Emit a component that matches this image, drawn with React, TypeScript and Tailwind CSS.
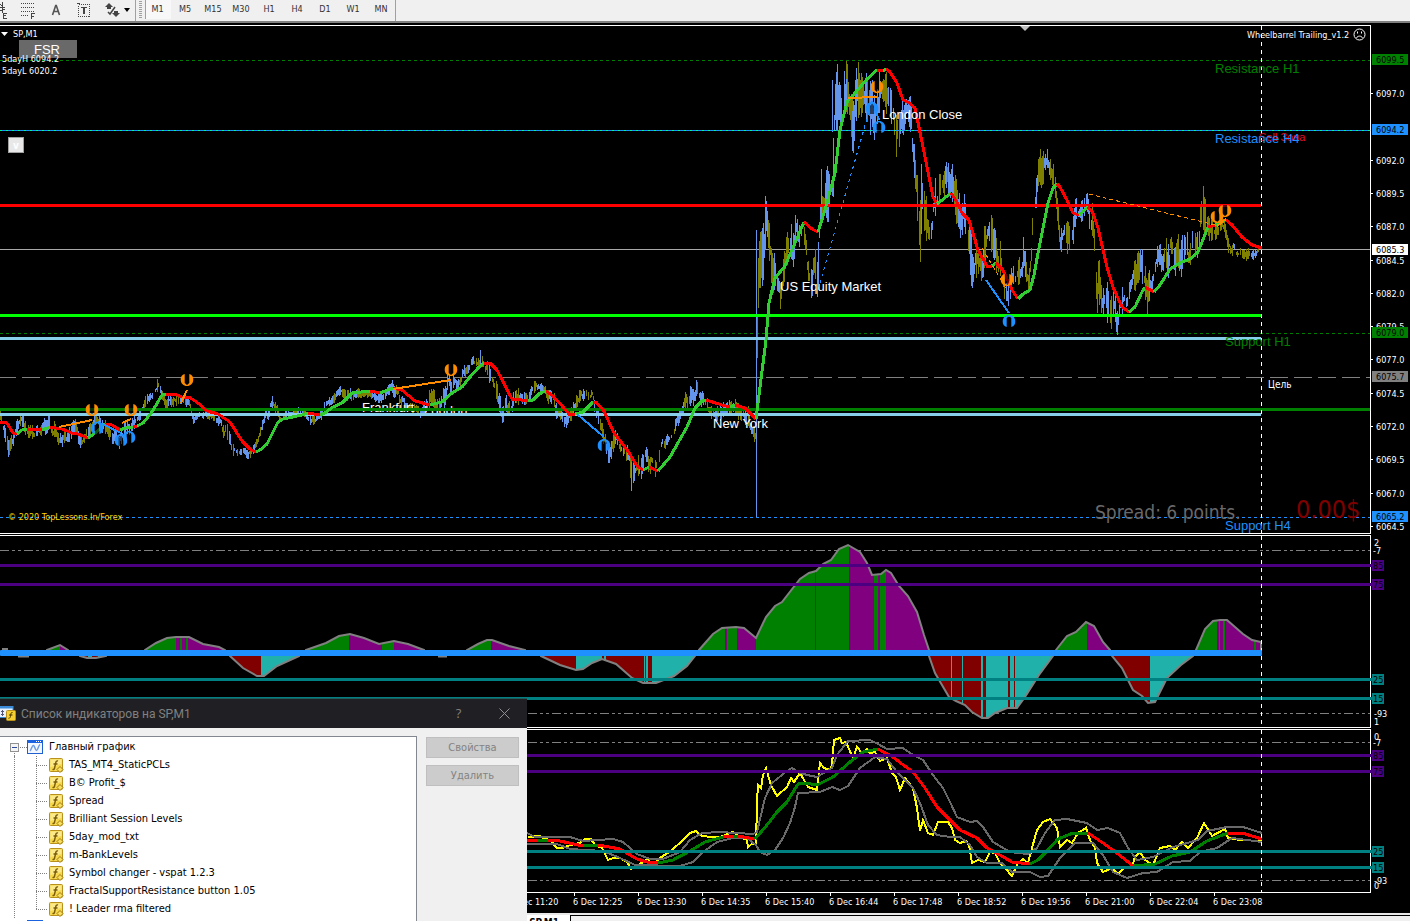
import React from "react";

type Point = [number, number];
type Segment = { color: string; points: string };

const GREEN = "#32cd32";
const RED = "#ff0000";
const UI_FONT = "font-['DejaVu_Sans_Condensed','DejaVu_Sans',sans-serif]";

/* ---------- price bars ---------- */

// x, middle, half of the bar range
const PRICE_KEYS: [number, number, number][] = [
  [0, 416, 6], [9, 450, 9], [20, 421, 8], [35, 432, 9], [50, 424, 8], [62, 442, 9], [75, 428, 8], [82, 445, 7],
  [95, 418, 8], [110, 433, 8], [118, 440, 9], [130, 425, 8], [140, 414, 6], [146, 397, 6], [152, 395, 4],
  [158, 383, 5], [165, 400, 7], [178, 402, 6], [189, 400, 6], [193, 418, 4], [205, 414, 4], [218, 418, 5],
  [228, 438, 10], [235, 450, 5], [243, 451, 4], [250, 455, 5], [258, 440, 5], [265, 415, 6], [273, 403, 7],
  [280, 417, 5], [300, 412, 4], [315, 422, 6], [325, 405, 5], [340, 391, 5], [350, 395, 6], [365, 393, 5],
  [378, 397, 5], [393, 388, 7], [405, 405, 6], [420, 410, 5], [432, 398, 13], [440, 407, 8], [447, 385, 12],
  [455, 383, 8], [465, 372, 6], [472, 362, 5], [482, 359, 6], [490, 377, 12], [502, 411, 10], [515, 398, 10],
  [528, 396, 6], [538, 384, 6], [545, 390, 6], [555, 405, 9], [563, 422, 11], [570, 411, 9], [583, 393, 7],
  [592, 394, 5], [600, 428, 9], [608, 452, 11], [615, 441, 9], [625, 450, 8], [632, 474, 14], [645, 457, 11],
  [655, 468, 10], [662, 444, 6], [672, 436, 7], [680, 413, 7], [690, 396, 12], [697, 390, 8], [705, 406, 8],
  [715, 412, 8], [730, 408, 9], [745, 414, 10], [755, 436, 14], [758, 265, 40], [766, 225, 30], [772, 272, 24],
  [780, 290, 16], [785, 262, 20], [795, 238, 20], [802, 226, 12], [806, 250, 22], [810, 275, 16], [817, 270, 26],
  [821, 200, 34], [827, 200, 32], [832, 170, 40], [835, 105, 34], [842, 98, 34], [847, 92, 28], [852, 120, 28],
  [858, 95, 32], [866, 95, 28], [873, 108, 26], [880, 95, 26], [884, 95, 26], [892, 115, 20], [898, 142, 28],
  [905, 110, 16], [911, 128, 26], [916, 165, 40], [920, 222, 42], [923, 210, 36], [930, 235, 32], [935, 205, 24],
  [940, 180, 18], [947, 178, 18], [955, 202, 28], [958, 220, 20], [964, 205, 18], [971, 258, 34], [976, 255, 26],
  [982, 256, 26], [988, 238, 22], [995, 240, 22], [1000, 262, 20], [1008, 295, 28], [1015, 275, 16],
  [1023, 260, 18], [1028, 285, 10], [1033, 220, 24], [1037, 182, 20], [1043, 165, 18], [1048, 160, 9],
  [1054, 180, 16], [1060, 235, 20], [1065, 220, 18], [1070, 243, 20], [1077, 210, 14], [1086, 202, 10],
  [1092, 228, 20], [1097, 285, 34], [1102, 305, 20], [1107, 302, 22], [1112, 308, 20], [1117, 315, 15],
  [1122, 300, 16], [1129, 292, 20], [1134, 268, 18], [1140, 264, 18], [1146, 285, 26], [1152, 286, 10],
  [1158, 258, 16], [1163, 255, 18], [1169, 250, 20], [1175, 262, 18], [1182, 256, 20], [1190, 245, 20],
  [1198, 232, 24], [1203, 212, 22], [1208, 228, 20], [1215, 232, 10], [1222, 222, 8], [1228, 246, 8],
  [1238, 251, 6], [1250, 254, 6], [1260, 250, 4],
];

const SPIKES: { x: number; from: number; to: number; up: boolean }[] = [
  { x: 757, from: 230, to: 517, up: true },
  { x: 766, from: 196, to: 250, up: true },
  { x: 833, from: 80, to: 132, up: true },
  { x: 838, from: 64, to: 110, up: true },
  { x: 847, from: 61, to: 112, up: false },
  { x: 853, from: 97, to: 147, up: false },
  { x: 859, from: 62, to: 118, up: false },
  { x: 871, from: 105, to: 135, up: true },
  { x: 1048, from: 149, to: 165, up: true },
  { x: 1148, from: 280, to: 314, up: false },
  { x: 1204, from: 186, to: 215, up: false },
  { x: 921, from: 200, to: 262, up: false },
  { x: 9, from: 440, to: 457, up: true },
  { x: 632, from: 462, to: 491, up: true },
  { x: 158, from: 379, to: 392, up: false },
  { x: 481, from: 350, to: 366, up: true },
];

function noise(n: number): number {
  const v = Math.sin(n * 127.1 + 11.7) * 43758.5453;
  return v - Math.floor(v);
}

function buildBars(): { up: string; down: string } {
  let up = "";
  let down = "";
  for (let i = 0; i < PRICE_KEYS.length - 1; i++) {
    const [x0, y0, a0] = PRICE_KEYS[i];
    const [x1, y1, a1] = PRICE_KEYS[i + 1];
    for (let x = x0; x < x1; x++) {
      if (noise(x + 2000) < 0.14) continue;
      const group = Math.floor(x / 3);
      const t = (x - x0) / (x1 - x0);
      const mid = y0 + (y1 - y0) * t;
      const amp = a0 + (a1 - a0) * t;
      const center = mid + (noise(group + 40) - 0.5) * amp;
      const half = amp * (0.12 + 0.78 * noise(x + 500));
      const bar = `M${x + 0.5} ${Math.round(center - half)}V${Math.round(center + half) + 1}`;
      const rising = noise(group + 900) * 0.8 + (y1 < y0 ? 0.18 : -0.1) > 0.45;
      if (rising) up += bar;
      else down += bar;
    }
  }
  for (const s of SPIKES) {
    const bar = `M${s.x - 0.5} ${s.from}V${s.to}`;
    if (s.up) up += bar;
    else down += bar;
  }
  return { up, down };
}

const BARS = buildBars();

const AVERAGE: Segment[] = [
  { color: RED, points: "0,422 7,423 13,433 17,434" },
  { color: GREEN, points: "17,434 22,430 27,429" },
  { color: RED, points: "27,429 42,430" },
  { color: GREEN, points: "42,430 50,427" },
  { color: RED, points: "50,427 62,429 72,433 78,434 88,438" },
  { color: GREEN, points: "88,438 95,433 105,424" },
  { color: RED, points: "105,424 112,425 120,430" },
  { color: GREEN, points: "120,430 125,428 133,427" },
  { color: RED, points: "133,427 137,426" },
  { color: GREEN, points: "137,426 143,423 152,412 162,395 166,394" },
  { color: RED, points: "166,394 177,395 182,397 189,397 198,403 207,411 218,414 230,422 242,441 250,449 256,452" },
  { color: GREEN, points: "256,452 260,450 267,444 278,422 283,419 302,415 308,413" },
  { color: RED, points: "308,413 320,415" },
  { color: GREEN, points: "320,415 325,413 333,407 342,403 352,393 370,391" },
  { color: RED, points: "370,391 380,393" },
  { color: GREEN, points: "380,393 393,388" },
  { color: RED, points: "393,388 402,390 415,401 430,405" },
  { color: GREEN, points: "430,405 442,402 452,393 462,387 470,377 478,368 484,363" },
  { color: RED, points: "484,363 490,363 497,370 512,399 515,399 528,401" },
  { color: GREEN, points: "528,401 533,400 540,393 546,391" },
  { color: RED, points: "546,391 553,396 563,407 569,414 575,414" },
  { color: GREEN, points: "575,414 583,412 593,402" },
  { color: RED, points: "593,402 596,402 604,411 614,433 628,451 637,466 643,470" },
  { color: GREEN, points: "643,470 649,467" },
  { color: RED, points: "649,467 658,471" },
  { color: GREEN, points: "658,471 670,457 687,427 695,408 702,401 706,400" },
  { color: RED, points: "706,400 722,405 730,407" },
  { color: GREEN, points: "730,407 735,405" },
  { color: RED, points: "735,405 745,408 756,419" },
  { color: GREEN, points: "756,419 760,387 766,340 769,303 775,278 785,266 795,243 804,222" },
  { color: RED, points: "804,222 812,229 818,232" },
  { color: GREEN, points: "818,232 825,210 835,173 840,130 847,102 855,93 867,79 877,70" },
  { color: RED, points: "877,70 883,71" },
  { color: GREEN, points: "883,71 886,69" },
  { color: RED, points: "886,69 890,72 897,83 903,100 908,102 915,108 923,147 933,197 937,204" },
  { color: GREEN, points: "937,204 951,193" },
  { color: RED, points: "951,193 957,202 962,213 969,220 978,250 987,266 992,266" },
  { color: GREEN, points: "992,266 996,263" },
  { color: RED, points: "996,263 1003,270 1012,290 1018,299" },
  { color: GREEN, points: "1018,299 1023,294 1030,290 1034,275 1038,253 1048,203 1053,188 1057,184" },
  { color: RED, points: "1057,184 1060,187 1067,200 1073,213 1079,215" },
  { color: GREEN, points: "1079,215 1088,207" },
  { color: RED, points: "1088,207 1093,213 1098,228 1107,267 1113,287 1122,307 1129,312" },
  { color: GREEN, points: "1129,312 1135,307 1142,292 1145,287" },
  { color: RED, points: "1145,287 1154,292" },
  { color: GREEN, points: "1154,292 1160,285 1170,269 1182,262 1190,259 1198,252 1208,227" },
  { color: RED, points: "1208,227 1215,225" },
  { color: GREEN, points: "1215,225 1226,220" },
  { color: RED, points: "1226,220 1232,225 1242,237 1252,245 1262,248" },
];

const PRICE_TICKS: [number, string][] = [
  [94, "6097.0"], [161, "6092.0"], [194, "6089.5"], [227, "6087.0"], [261, "6084.5"], [294, "6082.0"],
  [327, "6079.5"], [360, "6077.0"], [394, "6074.5"], [427, "6072.0"], [460, "6069.5"], [494, "6067.0"],
  [527, "6064.5"],
];

const PRICE_TAGS: { y: number; value: string; fill: string; ink: string }[] = [
  { y: 60, value: "6099.5", fill: "#008000", ink: "#000" },
  { y: 130, value: "6094.2", fill: "#1e90ff", ink: "#000" },
  { y: 250, value: "6085.3", fill: "#ffffff", ink: "#000" },
  { y: 333, value: "6079.0", fill: "#008000", ink: "#000" },
  { y: 377, value: "6075.7", fill: "#808080", ink: "#000" },
  { y: 517, value: "6065.2", fill: "#1e90ff", ink: "#000" },
];

const SELL_MARKS: Point[] = [[92, 410], [131, 410], [187, 380], [451, 370], [877, 87], [1007, 280], [1217, 217], [1225, 211]];
const BUY_MARKS: Point[] = [[97, 428], [121, 440], [129, 437], [604, 445], [872, 108], [879, 127], [1009, 321]];

function Marker({ at, color, flip }: { at: Point; color: string; flip?: boolean }) {
  return (
    <g transform={`translate(${at[0]} ${at[1]})${flip ? " rotate(180)" : ""}`}>
      <path
        d="M-2.300 -6C-5 -5.500 -6.500 -3 -6.300 0C-6 3.500 -3.500 6 0 6C3.500 6 6 3.500 6.300 0C6.500 -3 5 -5.500 2.300 -6V3L0 5L-2.300 3Z"
        fill={color}
      />
      <path d="M-2 -6H2V2L0 4.500L-2 2Z" fill="#000" fillOpacity="0.6" />
    </g>
  );
}

function ScaleTag({ y, value, fill }: { y: number; value: string; fill: string }) {
  return (
    <g>
      <rect x="1372" y={y - 5} width="12" height="11" fill={fill} />
      <text x="1373" y={y + 4} fontSize="9" fill="#000">{value}</text>
    </g>
  );
}

function PriceChart() {
  return (
    <svg
      className={`block h-[511px] w-full shrink-0 ${UI_FONT}`}
      viewBox="0 23 1410 511"
      preserveAspectRatio="xMaxYMin slice"
      role="img"
      aria-label="SP,M1"
    >
      <g shapeRendering="crispEdges" fill="none">
        <path d="M0 25.500H1370.500V534M0 533.500H1371" stroke="#fff" />
        <path d="M0 60.500H1370" stroke="#008000" strokeDasharray="3 3" />
        <path d="M0 333.500H1370" stroke="#008000" strokeDasharray="3 3" />
        <path d="M0 377.500H1370" stroke="#808080" strokeDasharray="18 6" strokeDashoffset="2" />
        <path d="M0 517.500H1370" stroke="#1e90ff" strokeDasharray="3 3" />
        <path d="M0 249.500H1370" stroke="#a8a8a8" />
        <path d={BARS.down} stroke="#808000" />
        <path d={BARS.up} stroke="#6495ed" />
      </g>
      <g className="font-['Liberation_Sans',Arial,sans-serif]" fontSize="13">
        <text x="362" y="412" fill="#fff">Frankfurt</text>
        <text x="424" y="415" fill="#fff">London</text>
      </g>
      <g shapeRendering="crispEdges" fill="none">
        <path d="M0 130.500H1370" stroke="#1e90ff" />
        <path d="M0 130.500H1370" stroke="#00ff7f" strokeDasharray="2 4" />
        <path d="M0 205.500H1261" stroke="#ff0000" strokeWidth="3" />
        <path d="M0 315.500H1262" stroke="#00ff00" strokeWidth="3" />
        <path d="M0 338.500H1261M0 414.500H1261" stroke="#87ceeb" strokeWidth="3" />
        <path d="M0 409.500H1370" stroke="#008000" strokeWidth="3" />
      </g>
      <g fill="none" strokeWidth="3" shapeRendering="crispEdges">
        {AVERAGE.map((s) => (
          <polyline key={s.points} points={s.points} stroke={s.color} />
        ))}
      </g>
      <g fill="none" shapeRendering="crispEdges">
        <path
          d="M59 427L92 420M122 423L131 419M181 403L187 390M393 389L451 380M848 98L877 97M1217 226L1226 219"
          stroke="#ff8c00"
          strokeWidth="2"
        />
        <path d="M98 422L121 433M577 414L604 437M872 101L879 120M986 280L1009 313" stroke="#1e90ff" strokeWidth="2" />
        <path d="M818 290L872 101" stroke="#1e90ff" strokeDasharray="3 4" />
        <path d="M1089 194L1215 225M982 248L1007 290" stroke="#ff8c00" strokeDasharray="4 3" />
      </g>
      {SELL_MARKS.map((at) => (
        <Marker key={`s${at[0]}`} at={at} color="#ff8c00" />
      ))}
      {BUY_MARKS.map((at) => (
        <Marker key={`b${at[0]}`} at={at} color="#1e90ff" flip />
      ))}
      <path d="M1261.500 26V534" stroke="#fff" strokeDasharray="4 4" shapeRendering="crispEdges" />
      <path d="M1020 26H1030L1025 31Z" fill="#c0c0c0" />
      <path d="M1 32H8L4.500 36Z" fill="#fff" />

      <g fontSize="9" fill="#fff">
        <text x="13" y="37">SP,M1</text>
        <text x="1247" y="38">Wheelbarrel Trailing_v1.2</text>
        <text x="1268" y="388" fontSize="10">Цель</text>
        <text x="8" y="520" fill="#ffd700">© 2020 TopLessons.In/Forex</text>
      </g>
      <g stroke="#fff" fill="none">
        <circle cx="1359.500" cy="34.500" r="5.500" />
        <path d="M1356.500 38C1357.500 35.500 1361.500 35.500 1362.500 38M1357.500 31.500V33.500M1361.500 31.500V33.500" />
      </g>

      <rect x="19" y="40" width="58" height="18" fill="#696969" />
      <g className="font-['Liberation_Sans',Arial,sans-serif]" fontSize="13">
        <text x="34" y="54" fill="#fff">FSR</text>
        <text x="882" y="119" fill="#fff">London Close</text>
        <text x="780" y="291" fill="#fff">US Equity Market</text>
        <text x="713" y="428" fill="#fff">New York</text>
        <text x="1259" y="141" fontSize="11" fill="#e0102a">Sell Зона</text>
        <text x="1215" y="73" fill="#008000">Resistance H1</text>
        <text x="1215" y="143" fill="#1e90ff">Resistance H4</text>
        <text x="1225" y="346" fill="#008000">Support H1</text>
        <text x="1225" y="530" fill="#1e90ff">Support H4</text>
      </g>
      <g fontSize="9" fill="#fff">
        <text x="2" y="62">5dayH 6094.2</text>
        <text x="2" y="74">5dayL 6020.2</text>
      </g>
      <rect x="8.500" y="137.500" width="15" height="15" fill="#e8e8e8" stroke="#a0a0a0" />
      <text x="13" y="149" fontSize="10" fontWeight="bold" fill="#fff">v</text>
      <text x="1095" y="519" fontSize="19" fill="#696969">Spread: 6 points.</text>
      <text x="1296" y="518" fontSize="25" fill="#800000">0.00$</text>

      <g fontSize="9" fill="#fff">
        {PRICE_TICKS.map(([y, value]) => (
          <g key={value}>
            <path d={`M1370 ${y - 0.5}H1373`} stroke="#fff" shapeRendering="crispEdges" />
            <text x="1376" y={y + 3}>{value}</text>
          </g>
        ))}
      </g>
      {PRICE_TAGS.map((tag) => (
        <g key={tag.value} fontSize="9">
          <rect x="1372" y={tag.y - 6} width="36" height="11" fill={tag.fill} shapeRendering="crispEdges" />
          <text x="1376" y={tag.y + 3} fill={tag.ink}>{tag.value}</text>
        </g>
      ))}
    </svg>
  );
}

/* ---------- histogram ---------- */

const UPPER = [
  "47,652 47,650 60,645 68,650 68,652",
  "145,652 145,650 156,643 167,638 176,637 189,637 203,644 219,647 225,650 225,652",
  "306,652 306,650 326,643 339,636 350,634 364,638 379,644 394,641 408,644 424,650 424,652",
  "467,652 467,650 478,644 487,640 492,640 509,646 525,650 525,652",
  "699,652 699,650 713,634 722,628 736,627 744,628 756,638 766,617 775,606 782,602 800,579 809,573 816,571 823,564 831,560 839,549 848,545 860,552 867,563 872,575 881,574 886,570 891,573 899,586 908,596 917,612 924,635 929,650 929,652",
  "1056,652 1056,650 1067,636 1076,632 1086,622 1094,626 1103,642 1110,650 1110,652",
  "1196,652 1196,650 1205,629 1213,621 1220,620 1227,620 1243,634 1252,640 1261,642 1261,652",
];

const LOWER = [
  "80,652 80,656 87,658 96,658 106,656 106,652",
  "230,652 230,656 243,668 257,676 264,676 277,666 299,656 299,652",
  "541,652 541,656 560,665 576,670 583,669 592,663 602,659 616,664 632,678 643,683 656,683 674,676 687,666 695,656 695,652",
  "929,652 929,656 935,673 949,697 956,701 965,705 972,712 982,718 988,718 995,713 1007,708 1017,708 1025,697 1039,675 1053,656 1053,652",
  "1112,652 1112,656 1122,668 1133,690 1142,696 1148,703 1155,702 1167,678 1181,665 1193,656 1193,652",
];

// purple ranges drawn over green
const UPPER_FALLING: Point[] = [
  [60, 70], [176, 180], [182, 186], [188, 226], [349, 382], [394, 425], [491, 526], [725, 727], [737, 756], [815, 816],
  [849, 874], [878, 880], [886, 930], [1087, 1111], [1217, 1219], [1220, 1223], [1225, 1254], [1256, 1262],
];

// light sea green ranges drawn over maroon
const LOWER_RISING: Point[] = [
  [88, 92], [98, 107], [261, 300], [576, 602], [604, 606], [644, 645], [646, 648], [652, 696], [951, 952],
  [962, 963], [981, 983], [986, 1008], [1010, 1014], [1015, 1054], [1150, 1194],
];

const SCALE_TAGS_TOP = [
  { y: 565, value: "85", fill: "#4b0082" },
  { y: 584, value: "75", fill: "#4b0082" },
  { y: 679, value: "25", fill: "#008080" },
  { y: 698, value: "15", fill: "#008080" },
];

function HistogramPanel() {
  return (
    <svg
      className={`block h-[194px] w-full shrink-0 ${UI_FONT}`}
      viewBox="0 534 1410 194"
      preserveAspectRatio="xMaxYMin slice"
      role="img"
      aria-label="Histogram"
    >
      <defs>
        <clipPath id="upper-area">
          {UPPER.map((p) => (
            <polygon key={p} points={p} />
          ))}
        </clipPath>
        <clipPath id="lower-area">
          {LOWER.map((p) => (
            <polygon key={p} points={p} />
          ))}
        </clipPath>
      </defs>
      <g shapeRendering="crispEdges" fill="none">
        <path d="M0 535.500H1370.500V727.500H0" stroke="#fff" />
        <path d="M0 550.500H1370M0 713.500H1370" stroke="#808080" strokeDasharray="9 3 3 3 3 3" />
      </g>
      <g clipPath="url(#upper-area)" shapeRendering="crispEdges">
        <rect x="0" y="540" width="1262" height="112" fill="#008000" />
        {UPPER_FALLING.map(([a, b]) => (
          <rect key={a} x={a} y="540" width={b - a} height="112" fill="#800080" />
        ))}
      </g>
      <g clipPath="url(#lower-area)" shapeRendering="crispEdges">
        <rect x="0" y="652" width="1262" height="70" fill="#800000" />
        {LOWER_RISING.map(([a, b]) => (
          <rect key={a} x={a} y="652" width={b - a} height="70" fill="#20b2aa" />
        ))}
      </g>
      <g fill="none" stroke="#808080" strokeWidth="2">
        {[...UPPER, ...LOWER].map((p) => (
          <polyline key={p} points={p} />
        ))}
        <path d="M2 649H8M18 656.500H29M438 656.500H447" />
      </g>
      <g shapeRendering="crispEdges" fill="none" strokeWidth="3">
        <path d="M0 565.500H1372M0 584.500H1372" stroke="#4b0082" />
        <path d="M0 679.500H1372M0 698.500H1372" stroke="#008080" />
      </g>
      <path d="M1261.500 536V728" stroke="#fff" strokeDasharray="4 4" shapeRendering="crispEdges" />
      <rect x="0" y="650" width="1262" height="6" rx="1" fill="#1e90ff" />
      <g fontSize="9" fill="#fff">
        <text x="1374" y="546">2</text>
        <text x="1373" y="554">-7</text>
        <text x="1374" y="717">-93</text>
        <text x="1374" y="725">1</text>
      </g>
      {SCALE_TAGS_TOP.map((t) => (
        <ScaleTag key={t.value} {...t} />
      ))}
    </svg>
  );
}

/* ---------- oscillator with the time axis ---------- */

const FAST =
  "528,837 540,836 545,839 550,840 557,848 563,848 570,845 580,843 585,839 591,839 595,845 602,848 608,860 613,858 620,858 627,862 631,869 640,864 648,859 653,866 660,858 672,850 682,841 690,833 696,831 702,836 712,837 720,837 733,832 740,837 747,840 748,847 753,843 756,845 757,802 758,785 761,788 763,775 766,768 768,775 771,785 777,796 787,787 791,778 794,782 800,773 804,780 808,787 817,790 820,763 824,768 830,770 832,765 834,740 840,738 842,743 846,742 853,758 857,747 862,753 867,749 870,753 875,752 880,761 887,758 892,773 896,777 900,790 905,778 913,788 917,808 920,831 923,820 928,833 933,835 938,822 948,822 952,828 955,840 960,843 966,841 969,845 972,863 978,860 985,862 990,852 995,853 1000,863 1005,868 1012,876 1018,863 1023,859 1028,863 1032,848 1037,830 1043,822 1050,819 1057,828 1060,847 1067,840 1072,843 1078,833 1086,828 1090,840 1095,848 1097,863 1103,872 1112,868 1118,874 1125,867 1132,867 1135,857 1140,852 1145,860 1153,865 1160,848 1170,846 1175,850 1182,842 1188,848 1197,838 1204,823 1212,836 1225,829 1228,838 1240,840 1262,841";

const BAND_TOP =
  "527,833 535,837 570,837 583,841 613,839 623,842 637,854 650,859 663,859 680,852 690,840 702,833 720,832 753,834 757,832 765,798 772,783 787,771 792,768 798,772 807,775 817,777 832,768 837,755 848,741 870,740 878,744 887,749 903,748 913,755 923,760 933,775 943,788 950,802 957,817 970,822 977,821 983,827 993,842 1010,852 1028,854 1037,848 1045,833 1055,820 1067,819 1087,823 1097,830 1108,828 1120,833 1128,848 1137,860 1153,857 1173,847 1198,840 1207,831 1227,827 1243,827 1262,833";

const BAND_BOTTOM =
  "527,844 557,844 570,849 603,851 620,858 635,865 680,866 693,862 703,852 717,842 733,838 747,838 756,845 760,852 767,855 775,850 783,838 790,823 795,807 798,793 820,792 832,787 840,790 848,786 860,768 875,757 887,759 897,772 905,780 913,788 920,803 928,825 937,835 950,837 960,837 970,845 977,857 987,863 1002,863 1012,872 1030,872 1040,877 1048,876 1060,858 1075,843 1093,843 1103,855 1113,872 1127,878 1143,873 1157,872 1173,862 1190,861 1200,852 1217,848 1232,838 1262,842";

const SLOW: Segment[] = [
  { color: "#ff0000", points: "527,840 537,841" },
  { color: "#008000", points: "537,841 548,840" },
  { color: "#ff0000", points: "548,840 560,841 583,846" },
  { color: "#008000", points: "583,846 598,845" },
  { color: "#ff0000", points: "598,845 620,849 637,859 647,862 658,863" },
  { color: "#008000", points: "658,863 673,860 690,851 705,842 723,837" },
  { color: "#ff0000", points: "723,837 733,836" },
  { color: "#008000", points: "733,836 738,836" },
  { color: "#ff0000", points: "738,836 755,839" },
  { color: "#008000", points: "755,839 767,825 777,812 787,802 798,784 805,783 817,785 833,777 850,762 863,752 878,749" },
  { color: "#ff0000", points: "878,749 893,757 902,764 913,772 925,788 937,807 950,820 960,830 977,838 987,848 1000,855 1012,862 1030,864" },
  { color: "#008000", points: "1030,864 1038,860 1048,850 1058,839 1073,833 1088,833" },
  { color: "#ff0000", points: "1088,833 1103,843 1117,853 1133,866" },
  { color: "#008000", points: "1133,866 1155,864 1172,856 1190,852 1207,841 1228,833" },
  { color: "#ff0000", points: "1228,833 1242,833 1262,839" },
];

const TIMES = ["11:20", "12:25", "13:30", "14:35", "15:40", "16:44", "17:48", "18:52", "19:56", "21:00", "22:04", "23:08"];

const SCALE_TAGS_BOTTOM = [
  { y: 755, value: "85", fill: "#4b0082" },
  { y: 771, value: "75", fill: "#4b0082" },
  { y: 851, value: "25", fill: "#008080" },
  { y: 867, value: "15", fill: "#008080" },
];

function OscillatorPanel() {
  return (
    <svg
      className={`block h-[185px] w-full shrink-0 ${UI_FONT}`}
      viewBox="0 728 1410 185"
      preserveAspectRatio="xMaxYMin slice"
      role="img"
      aria-label="Oscillator"
    >
      <g shapeRendering="crispEdges" fill="none">
        <path d="M0 729.500H1370.500V892.500H0" stroke="#fff" />
        <path d="M0 742.500H1370M0 880.500H1370" stroke="#808080" strokeDasharray="9 3 3 3 3 3" />
      </g>
      <g fill="none" strokeWidth="2" shapeRendering="crispEdges">
        <polyline points={FAST} stroke="#ffff00" />
        <polyline points={BAND_TOP} stroke="#696969" />
        <polyline points={BAND_BOTTOM} stroke="#696969" />
      </g>
      <g fill="none" strokeWidth="3" shapeRendering="crispEdges">
        {SLOW.map((s) => (
          <polyline key={s.points} points={s.points} stroke={s.color} />
        ))}
        <path d="M0 755.500H1372M0 771.500H1372" stroke="#4b0082" />
        <path d="M0 851.500H1372M0 867.500H1372" stroke="#008080" />
      </g>
      <path d="M1261.500 730V892" stroke="#fff" strokeDasharray="4 4" shapeRendering="crispEdges" />
      <g fontSize="9" fill="#fff">
        <text x="1374" y="740">0</text>
        <text x="1373" y="746">-7</text>
        <text x="1374" y="884">-93</text>
        <text x="1374" y="889">0</text>
        {TIMES.map((time, i) => (
          <g key={time}>
            <path d={`M${510.5 + i * 64} 892V896`} stroke="#fff" shapeRendering="crispEdges" />
            <text x={509 + i * 64} y="905">6 Dec {time}</text>
          </g>
        ))}
      </g>
      {SCALE_TAGS_BOTTOM.map((t) => (
        <ScaleTag key={t.value} {...t} />
      ))}
    </svg>
  );
}

/* ---------- toolbar ---------- */

const PERIODS = ["M1", "M5", "M15", "M30", "H1", "H4", "D1", "W1", "MN"];

function Toolbar() {
  return (
    <header className="flex h-[23px] shrink-0 border-b-2 border-[#808080] bg-[#f0f0f0]">
      <button type="button" aria-label="Equidistant channel" className="flex h-5 w-[14px] items-center">
        <svg width="8" height="18" viewBox="0 0 8 18" fill="none" stroke="#444" shapeRendering="crispEdges">
          <path d="M0 6H5M0 10L5 8M2.500 1V12M0 3L2 5M4 12.500H7M3.500 12V18M3 14.500H6M3 17.500H7" />
        </svg>
      </button>
      <button type="button" aria-label="Fibonacci retracement" className="flex h-5 w-7 items-center justify-center">
        <svg width="16" height="18" viewBox="0 0 16 18" fill="none" stroke="#444" shapeRendering="crispEdges">
          <path d="M1 2.500H15M1 6.500H15M1 10.500H15M1 14.500H9" strokeDasharray="1 1" />
          <path d="M11.500 12V18M11 12.500H15M11 15.500H14" />
        </svg>
      </button>
      <button type="button" aria-label="Text" className="flex h-5 w-7 items-center justify-center">
        <svg width="10" height="12" viewBox="0 0 10 12" fill="none" stroke="#555" strokeWidth="1.600">
          <path d="M1.500 11L4.700 1.500H5.300L8.500 11M3 7.500H7" />
        </svg>
      </button>
      <button type="button" aria-label="Text label" className="flex h-5 w-7 items-center justify-center">
        <svg width="14" height="16" viewBox="0 0 14 16" fill="none" stroke="#444" shapeRendering="crispEdges">
          <path d="M1.500 2.500H12.500V14.500H1.500Z" strokeDasharray="1 1" />
          <path d="M0 1.500H3M4 5.500H10" />
          <path d="M7 5V12" strokeWidth="2" />
        </svg>
      </button>
      <button type="button" aria-label="Arrows" className="flex h-5 w-[37px] items-center justify-center gap-1 pl-px">
        <svg width="15" height="14" viewBox="0 0 15 14" fill="#444">
          <path d="M4 0L8 4H6V6H2V4H0ZM11 14L7 10H9V8H13V10H15Z" />
          <path d="M3 9L5 11L10 4" stroke="#444" fill="none" strokeWidth="1.500" />
        </svg>
        <svg width="6" height="4" viewBox="0 0 6 4" fill="#000">
          <path d="M0 0H6L3 4Z" />
        </svg>
      </button>
      <div className="h-full w-px bg-[#a0a0a0]" />
      <div className="mr-px ml-[3px] flex h-[18px] w-[3px] flex-col justify-between pt-px">
        {PERIODS.map((p) => (
          <span key={p} className="h-px w-full bg-[#a0a0a0]" />
        ))}
      </div>
      <nav className={`flex h-[19px] text-[9px] leading-[19px] text-[#333] ${UI_FONT}`}>
        {PERIODS.map((p, i) => (
          <button
            key={p}
            type="button"
            aria-pressed={i === 0}
            className={
              i === 0
                ? "ml-[2px] w-[26px] border-l border-[#a0a0a0] bg-[#f8f8f8] pr-[2px] text-center"
                : "w-7 text-center"
            }
          >
            {p}
          </button>
        ))}
      </nav>
      <div className="h-full w-px bg-[#a0a0a0]" />
    </header>
  );
}

/* ---------- indicator dialog ---------- */

const INDICATORS = [
  "TAS_MT4_StaticPCLs",
  "B© Profit_$",
  "Spread",
  "Brilliant Session Levels",
  "5day_mod_txt",
  "m-BankLevels",
  "Symbol changer - vspat 1.2.3",
  "FractalSupportResistance button 1.05",
  "! Leader rma filtered",
];

function IndicatorIcon() {
  return (
    <svg width="15" height="15" viewBox="0 0 15 15" className="shrink-0">
      <rect x="0.500" y="0.500" width="13" height="13" rx="1" fill="#f5d84e" stroke="#b8901c" />
      <path d="M1.500 1.500H12.500V6L1.500 9Z" fill="#fbe98c" />
      <path d="M9 3C7.500 2.500 7 3.500 6.700 5L5.600 10C5.300 11.500 4.500 11.700 3.500 11.300M4.500 6H8.500" fill="none" stroke="#7a5c0a" strokeWidth="1.400" />
      <path d="M11 8.500L14 11.500L11 14.500L8 11.500Z" fill="#f8df60" stroke="#a07a10" />
    </svg>
  );
}

function WindowIcon() {
  return (
    <svg width="16" height="14" viewBox="0 0 16 14" className="shrink-0">
      <rect x="0.500" y="0.500" width="15" height="13" fill="#f2f7ff" stroke="#1f5fd0" />
      <rect x="0" y="0" width="16" height="3" fill="#1a62e0" />
      <path d="M9 1.500H10M11 1.500H12M13 1.500H14" stroke="#fff" />
      <path d="M3 11C4.500 10 5 5 6.500 5.500C8 6 8 10.500 9.500 10.500C11 10.500 11 6 13 4.500" fill="none" stroke="#6f9be0" strokeWidth="1.500" />
    </svg>
  );
}

function IndicatorDialog() {
  return (
    <section
      role="dialog"
      aria-labelledby="dialog-title"
      className="absolute top-[698px] bottom-0 left-0 flex w-[527px] flex-col overflow-hidden bg-[#f0f0f0]"
    >
      <div className="flex h-[30px] shrink-0 items-center border-t border-[#1f5c5c] bg-[#202024] text-[#808080]">
        <svg width="16" height="15" viewBox="0 0 16 15" className="shrink-0">
          <rect x="-2" y="0.500" width="15" height="11" fill="#e8f2ff" stroke="#3b8ad8" />
          <path d="M-2 1.500H13" stroke="#3b8ad8" strokeWidth="2" />
          <path d="M2.500 4V10M1 5.500H4M1 8.500H4" stroke="#557" />
          <rect x="6.500" y="4.500" width="9" height="10" rx="1" fill="#f5d030" stroke="#b8901c" />
          <path d="M12.500 6.500C11 6 11 7.500 10.700 9C10.500 11 10 12.500 8.500 12.300M9 9H12.500" fill="none" stroke="#4a3800" />
        </svg>
        <h2 id="dialog-title" className="ml-[5px] font-[Roboto,'Noto_Sans',sans-serif] text-[12px] leading-4 font-normal">
          Список индикаторов на SP,M1
        </h2>
        <button type="button" aria-label="Help" className="ml-auto flex h-full w-[45px] items-center justify-center font-['Open_Sans',sans-serif] text-[13px]">
          ?
        </button>
        <button type="button" aria-label="Close" className="flex h-full w-[46px] items-center justify-center">
          <svg width="11" height="11" viewBox="0 0 11 11" fill="none" stroke="#909090">
            <path d="M0.500 0.500L10.500 10.500M10.500 0.500L0.500 10.500" />
          </svg>
        </button>
      </div>
      <div className={`flex min-h-0 flex-1 gap-[9px] pt-2 pr-2 text-[11px] ${UI_FONT}`}>
        <div className="min-w-0 flex-1 overflow-hidden border-t border-r border-[#828790] bg-white pt-px text-black">
          <div className="relative flex h-[18px] items-center pl-[10px]">
            <svg width="17" height="18" viewBox="0 0 17 18" className="shrink-0" shapeRendering="crispEdges">
              <rect x="0.500" y="5.500" width="8" height="8" fill="#f4f4f4" stroke="#919191" />
              <path d="M2 9.500H7" stroke="#2b4a9b" />
              <path d="M10 9.500H17M4.500 15V18" stroke="#808080" strokeDasharray="1 1" />
            </svg>
            <WindowIcon />
            <span className="ml-[6px] leading-[18px]">Главный график</span>
          </div>
          <ul className="ml-[14px] border-l border-dotted border-[#808080]">
            {INDICATORS.map((name, i) => (
              <li key={name} className="flex h-[18px] items-center pl-[21px]">
                <svg width="13" height="18" viewBox="0 0 13 18" className="shrink-0" shapeRendering="crispEdges">
                  <path
                    d={i === INDICATORS.length - 1 ? "M0.500 0V10M0 9.500H11" : "M0.500 0V18M0 9.500H11"}
                    fill="none"
                    stroke="#808080"
                    strokeDasharray="1 1"
                  />
                </svg>
                <IndicatorIcon />
                <span className="ml-[5px] leading-[18px] whitespace-nowrap">{name}</span>
              </li>
            ))}
          </ul>
          <div className="flex h-[18px] items-center pl-[27px]">
            <WindowIcon />
          </div>
        </div>
        <div className="flex w-[93px] flex-col gap-[7px] pt-px text-[#838383]">
          <button type="button" disabled className="h-[21px] border border-[#bfbfbf] bg-[#cccccc] leading-[18px]">
            Свойства
          </button>
          <button type="button" disabled className="h-[21px] border border-[#bfbfbf] bg-[#cccccc] leading-[18px]">
            Удалить
          </button>
        </div>
      </div>
    </section>
  );
}

export default function App() {
  return (
    <main className="relative flex h-screen flex-col overflow-hidden bg-black">
      <Toolbar />
      <PriceChart />
      <HistogramPanel />
      <OscillatorPanel />
      <footer className="flex min-h-0 flex-1 overflow-hidden border-t-2 border-[#e8e8e8] bg-[#f0f0f0]">
        <a href="#chart" className={`w-[571px] border-r border-black bg-white pt-[2px] pr-[11px] text-right text-[10px] leading-[11px] font-bold text-black ${UI_FONT}`}>
          SP,M1
        </a>
        <div className="flex-1 border-t border-black" />
      </footer>
      <IndicatorDialog />
    </main>
  );
}
